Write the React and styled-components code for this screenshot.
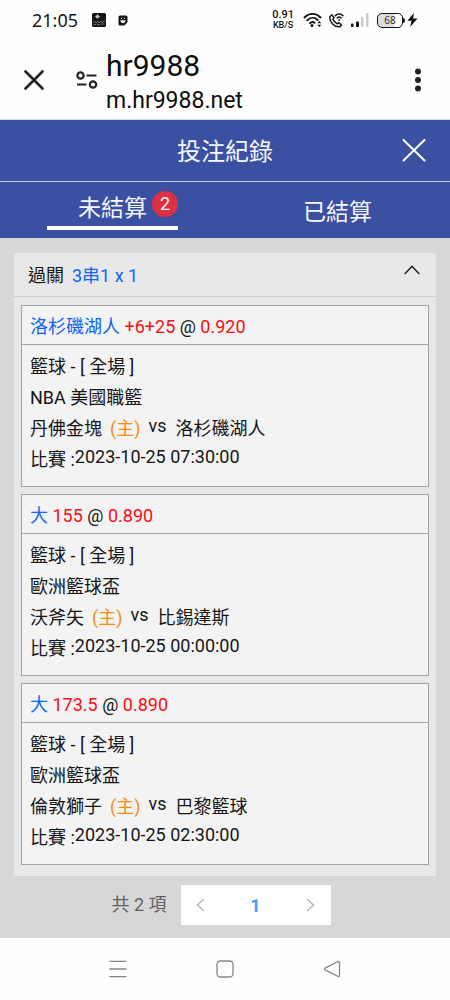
import styled, { createGlobalStyle, ThemeProvider } from 'styled-components';

const theme = {
    colors: {
        primary: '#3c50a2',
        onPrimary: '#f7f8fd',
        background: '#d7d7d7',
        panel: '#e8e8e8',
        ticket: '#f3f3f3',
        border: '#a2a2a2',
        chrome: '#fefefe',
        text: '#161616',
        link: '#1064fa',
        odds: '#fb0d12',
        home: '#ff8a0c',
        badge: '#dc3043',
        muted: '#606266',
        active: '#409eff',
        disabled: '#b4b8c2',
    },
    font: "Roboto, 'Noto Sans CJK TC', sans-serif",
}

const bets = [
    {
        pick: '洛杉磯湖人', line: '+6+25', odds: '0.920',
        league: 'NBA 美國職籃', home: '丹佛金塊', away: '洛杉磯湖人', time: '2023-10-25 07:30:00',
    },
    {
        pick: '大', line: '155', odds: '0.890',
        league: '歐洲籃球盃', home: '沃斧矢', away: '比錫達斯', time: '2023-10-25 00:00:00',
    },
    {
        pick: '大', line: '173.5', odds: '0.890',
        league: '歐洲籃球盃', home: '倫敦獅子', away: '巴黎籃球', time: '2023-10-25 02:30:00',
    },
]

const StatusIcons = () => (
    <StatusRight>
        <Speed><span>0.91</span><small>KB/S</small></Speed>
        <svg width="20" height="16" viewBox="0 0 20 16" fill="none" stroke="#111" strokeWidth="1.9" strokeLinecap="round">
            <path d="M1.500 5.500C6 .600 13 .600 17.500 5.500M4.200 8.400C7.400 5.100 11.600 5.100 14.600 8M7 11.200C8.300 9.900 10.200 9.700 11.600 10.800" />
            <circle cx="9" cy="13.600" r="1.500" fill="#111" stroke="none" />
            <path d="M14.300 11.300L16.300 8.900L18.300 11.300ZM14.300 12.700L16.300 15.100L18.300 12.700Z" fill="#111" stroke="none" />
        </svg>
        <svg width="15" height="15" viewBox="0 0 15 15" fill="none" stroke="#111" strokeWidth="1.500" strokeLinecap="round" strokeLinejoin="round">
            <path d="M1 3.500L2.800 1.800L5 4.600L3.900 6.300C4.700 8.400 6.200 9.900 8.300 10.800L10 9.700L12.400 12L11 13.700C5.500 14.600.200 9 1 3.500Z" />
            <path d="M6.400 2.600C8.500.500 11.800.500 13.900 2.600M8.300 4.900C9.400 3.900 10.900 3.900 12 4.900" />
            <path d="M10.200 6.800V7.400" />
        </svg>
        <svg width="19" height="16" viewBox="0 0 19 16">
            <rect x="1" y="11.500" width="2.500" height="3.500" rx="0.800" fill="#111" />
            <rect x="6" y="9.500" width="3" height="5.500" rx="0.800" fill="#111" />
            <rect x="11" y="5" width="2.500" height="10" rx="0.800" fill="#ccc" />
            <rect x="16" y="1" width="2.500" height="14" rx="0.800" fill="#ccc" />
        </svg>
        <BatteryWrap>
            <Battery>68</Battery>
            <BatteryCap />
            <svg width="11" height="16" viewBox="0 0 11 16">
                <path d="M6.800 1L.500 8.700H4.500L3.200 15L10.500 6.600H6.200Z" fill="#111" />
            </svg>
        </BatteryWrap>
    </StatusRight>
)

const Bet = ({ bet }) => (
    <Ticket>
        <TicketTitle>
            <Pick>{bet.pick}</Pick> <Odds>{bet.line}</Odds> @ <Odds>{bet.odds}</Odds>
        </TicketTitle>
        <TicketBody>
            <Line>籃球 - [ 全場 ]</Line>
            <Line>{bet.league}</Line>
            <Teams>
                <span>{bet.home}</span>
                <Home>(主)</Home>
                <Versus>vs</Versus>
                <span>{bet.away}</span>
            </Teams>
            <Line>
                <span>比賽 :</span>
                <Latin>{bet.time}</Latin>
            </Line>
        </TicketBody>
    </Ticket>
)

const App = () => {

    return (
        <ThemeProvider theme={theme}>
            <GlobalStyle />
            <Page>
                <StatusBar>
                    <Clock>21:05</Clock>
                    <svg width="14" height="14" viewBox="0 0 14 14">
                        <rect width="14" height="14" rx="1.500" fill="#161616" />
                        <circle cx="5.500" cy="3.500" r="1.600" fill="#eee" />
                        <path d="M3 3.500H8M5.500 1.200V5.800" stroke="#bbb" strokeWidth="0.700" />
                        <path d="M1 9.500L3 8.500L4 10L6 8.300L7 10L9 8L10 9.500L13 7.500M1.500 11.500H4M5 11.500H8M9 11H12.500" stroke="#888" strokeWidth="0.800" fill="none" />
                    </svg>
                    <svg width="10" height="11" viewBox="0 0 10 11">
                        <path d="M2 .500H8Q9.500.500 9.500 2V7L6.500 10.500H2Q.500 10.500.500 9V2Q.500.500 2 .500Z" fill="#161616" />
                        <path d="M2.300 5.200H7.600Q7.300 8 5 8Q2.600 8 2.300 5.200Z" fill="#fff" />
                        <path d="M3 3.300H4M6 3.300H7" stroke="#fff" strokeWidth="1" />
                    </svg>
                    <StatusIcons />
                </StatusBar>

                <BrowserBar>
                    <IconButton aria-label="Close tab">
                        <svg width="20" height="20" viewBox="0 0 20 20" stroke="#222" strokeWidth="2.600" strokeLinecap="round">
                            <path d="M1.500 1.500L18.500 18.500M18.500 1.500L1.500 18.500" />
                        </svg>
                    </IconButton>
                    <SiteButton aria-label="Site settings">
                        <svg width="22" height="18" viewBox="0 0 22 18" fill="none" stroke="#222" strokeWidth="2.200">
                            <circle cx="4.500" cy="4.500" r="3.200" />
                            <path d="M10.500 4.500H20.500M1 13.500H10.500" />
                            <circle cx="17" cy="13.500" r="3.200" />
                        </svg>
                    </SiteButton>
                    <Address>
                        <SiteName>hr9988</SiteName>
                        <SiteUrl>m.hr9988.net</SiteUrl>
                    </Address>
                    <IconButton aria-label="More">
                        <svg width="20" height="24" viewBox="0 0 20 24" fill="#222">
                            <circle cx="10" cy="3.500" r="3" />
                            <circle cx="10" cy="12" r="3" />
                            <circle cx="10" cy="20.500" r="3" />
                        </svg>
                    </IconButton>
                </BrowserBar>

                <Header>
                    <Title>投注紀錄</Title>
                    <IconButton aria-label="Close">
                        <svg width="24" height="24" viewBox="0 0 24 24" stroke="#fff" strokeWidth="2" strokeLinecap="round">
                            <path d="M1.500 1L22.500 21.500M22.500 1L1.500 21.500" />
                        </svg>
                    </IconButton>
                </Header>

                <Tabs>
                    <Tab>
                        <TabLabel $active>未結算<Badge>2</Badge></TabLabel>
                    </Tab>
                    <Tab>
                        <TabLabel>已結算</TabLabel>
                    </Tab>
                </Tabs>

                <Main>
                    <Panel>
                        <PanelHeader>
                            <span>過關</span>
                            <Pick>3串1 x 1</Pick>
                            <Chevron width="16" height="10" viewBox="0 0 16 10" fill="none" stroke="#222" strokeWidth="1.500">
                                <path d="M.700 9L8 1.300L15.300 9" />
                            </Chevron>
                        </PanelHeader>
                        <Tickets>
                            {bets.map((bet) => <Bet key={bet.time} bet={bet} />)}
                        </Tickets>
                    </Panel>

                    <Pagination>
                        <Total>共 2 項</Total>
                        <Pager>
                            <PageButton aria-label="Previous" disabled>
                                <svg width="9" height="14" viewBox="0 0 9 14" fill="none" stroke="currentColor" strokeWidth="1.600">
                                    <path d="M8 1L1.500 7L8 13" />
                                </svg>
                            </PageButton>
                            <PageButton $active>1</PageButton>
                            <PageButton aria-label="Next" disabled>
                                <svg width="9" height="14" viewBox="0 0 9 14" fill="none" stroke="currentColor" strokeWidth="1.600">
                                    <path d="M1 1L7.500 7L1 13" />
                                </svg>
                            </PageButton>
                        </Pager>
                    </Pagination>
                </Main>

                <SystemNav>
                    <IconButton aria-label="Recent apps">
                        <svg width="18" height="18" viewBox="0 0 18 18" stroke="#858585" strokeWidth="1.300">
                            <path d="M.500 1.300H17.500M.500 9H17.500M.500 16.700H17.500" />
                        </svg>
                    </IconButton>
                    <IconButton aria-label="Home">
                        <svg width="18" height="18" viewBox="0 0 18 18" fill="none" stroke="#858585" strokeWidth="1.300">
                            <rect x="1" y="1" width="16" height="16" rx="3.500" />
                        </svg>
                    </IconButton>
                    <IconButton aria-label="Back">
                        <svg width="18" height="18" viewBox="0 0 18 18" fill="none" stroke="#858585" strokeWidth="1.300" strokeLinejoin="round">
                            <path d="M15.300 1.500L2 8.200Q1 9 2 9.800L15.300 16.500Q16.500 16.700 16.500 15.500V2.500Q16.500 1.300 15.300 1.500Z" />
                        </svg>
                    </IconButton>
                </SystemNav>
            </Page>
        </ThemeProvider>
    )
}

export default App

const GlobalStyle = createGlobalStyle`
    * {
        box-sizing: border-box;
    }

    body {
        margin: 0;
        font-family: ${({ theme }) => theme.font};
        font-size: 18px;
        color: ${({ theme }) => theme.colors.text};
        background-color: ${({ theme }) => theme.colors.chrome};
    }

    button {
        font: inherit;
        color: inherit;
        padding: 0;
        border: 0;
        background: none;
        cursor: pointer;
    }

    svg {
        display: block;
        flex-shrink: 0;
    }
`

const Page = styled.div`
    min-height: 100vh;
    display: flex;
    flex-direction: column;
`

const StatusBar = styled.div`
    height: 40px;
    padding: 0 32px;
    display: flex;
    align-items: center;
    font-family: 'Noto Sans', sans-serif;
`

const Clock = styled.span`
    line-height: 24px;
    margin-right: 14px;

    & + svg {
        margin-right: 12px;
    }
`

const StatusRight = styled.div`
    margin-left: auto;
    display: flex;
    align-items: center;
    gap: 6px;
`

const Speed = styled.span`
    display: flex;
    flex-direction: column;
    align-items: center;
    margin-right: 3px;
    font-family: Roboto, sans-serif;
    font-size: 11px;
    font-weight: 500;
    line-height: 10px;

    small {
        font-size: 9px;
    }
`

const BatteryWrap = styled.span`
    display: flex;
    align-items: center;
    padding-left: 2px;
`

const Battery = styled.span`
    width: 26px;
    height: 15px;
    border: 1px solid #111;
    border-radius: 5px;
    background: linear-gradient(to right, #ddd 68%, #fff 68%);
    font-size: 10px;
    line-height: 13px;
    text-align: center;
    color: #333;
`

const BatteryCap = styled.span`
    width: 2px;
    height: 5px;
    margin-right: 2px;
    border-radius: 0 2px 2px 0;
    background-color: #222;
`

const BrowserBar = styled.div`
    height: 80px;
    padding: 0 22px 0 24px;
    display: flex;
    align-items: center;
    border-bottom: 1px solid #dcdce6;
`

const IconButton = styled.button`
    display: flex;
    align-items: center;
    justify-content: center;
`

const SiteButton = styled(IconButton)`
    margin: 0 8px 0 32px;
`

const Address = styled.div`
    flex: 1;
    color: #0c0c0c;
    padding-top: 8px;
`

const SiteName = styled.div`
    font-size: 30px;
    line-height: 34px;
`

const SiteUrl = styled.div`
    font-size: 23px;
    line-height: 36px;
`

const Header = styled.header`
    height: 62px;
    padding: 0 24px;
    display: grid;
    grid-template-columns: 24px 1fr 24px;
    align-items: center;
    color: ${({ theme }) => theme.colors.onPrimary};
    background-color: ${({ theme }) => theme.colors.primary};
    border-bottom: 1px solid #c3c8e2;
`

const Title = styled.h1`
    grid-column: 2;
    margin: 0;
    padding-top: 2px;
    font-size: 24px;
    font-weight: 400;
    line-height: 32px;
    text-align: center;
`

const Tabs = styled.nav`
    height: 56px;
    display: grid;
    grid-template-columns: 1fr 1fr;
    background-color: ${({ theme }) => theme.colors.primary};
`

const Tab = styled.button`
    display: flex;
    align-items: center;
    justify-content: center;
`

const TabLabel = styled.span`
    position: relative;
    padding: ${({ $active }) => $active ? '2px 31px 0' : '5px 31px 0'};
    font-size: 23px;
    line-height: 34px;
    color: ${({ theme }) => theme.colors.onPrimary};
    border-bottom: ${({ $active }) => $active ? '4px solid #fff' : '0'};
`

const Badge = styled.span`
    position: absolute;
    top: 1px;
    right: 0;
    width: 26px;
    height: 26px;
    border-radius: 50%;
    font-size: 18px;
    line-height: 26px;
    text-align: center;
    background-color: ${({ theme }) => theme.colors.badge};
`

const Main = styled.main`
    flex: 1;
    padding: 15px 14px 13px;
    background-color: ${({ theme }) => theme.colors.background};
`

const Panel = styled.section`
    background-color: ${({ theme }) => theme.colors.panel};
`

const PanelHeader = styled.button`
    width: 100%;
    height: 44px;
    padding: 2px 16px 0 14px;
    display: flex;
    align-items: center;
    gap: 8px;
    line-height: 24px;
    border-bottom: 1px solid #cfcfcf;
`

const Chevron = styled.svg`
    margin: 0 0 12px auto;
`

const Tickets = styled.div`
    padding: 8px 7px 11px;
    display: flex;
    flex-direction: column;
    gap: 7px;
`

const Ticket = styled.article`
    border: 1px solid ${({ theme }) => theme.colors.border};
    background-color: ${({ theme }) => theme.colors.ticket};
`

const TicketTitle = styled.div`
    height: 39px;
    padding: 0 8px;
    line-height: 42px;
    border-bottom: 1px solid ${({ theme }) => theme.colors.border};
`

const Pick = styled.span`
    color: ${({ theme }) => theme.colors.link};
`

const Odds = styled.span`
    color: ${({ theme }) => theme.colors.odds};
`

const TicketBody = styled.div`
    padding: 6px 8px 11px;
`

const Line = styled.div`
    display: flex;
    align-items: flex-start;
    line-height: 31px;
`

const Teams = styled(Line)`
    gap: 8px;
`

const Home = styled.span`
    color: ${({ theme }) => theme.colors.home};
`

const Latin = styled.span`
    line-height: 26px;
`

const Versus = styled(Latin)`
    margin-right: 1px;
`

const Pagination = styled.div`
    padding: 9px 8px 0 0;
    display: flex;
    align-items: center;
    justify-content: center;
    gap: 14px;
    color: ${({ theme }) => theme.colors.muted};
`

const Total = styled.span`
    line-height: 24px;
`

const Pager = styled.div`
    height: 40px;
    display: flex;
    background-color: #fff;
`

const PageButton = styled.button`
    width: ${({ $active }) => $active ? '70px' : '40px'};
    display: flex;
    align-items: center;
    justify-content: center;
    font-weight: 700;
    color: ${({ theme, $active }) => $active ? theme.colors.active : theme.colors.disabled};
`

const SystemNav = styled.nav`
    height: 62px;
    padding: 0 64px;
    display: grid;
    grid-template-columns: repeat(3, 1fr);
    background-color: ${({ theme }) => theme.colors.chrome};
`
